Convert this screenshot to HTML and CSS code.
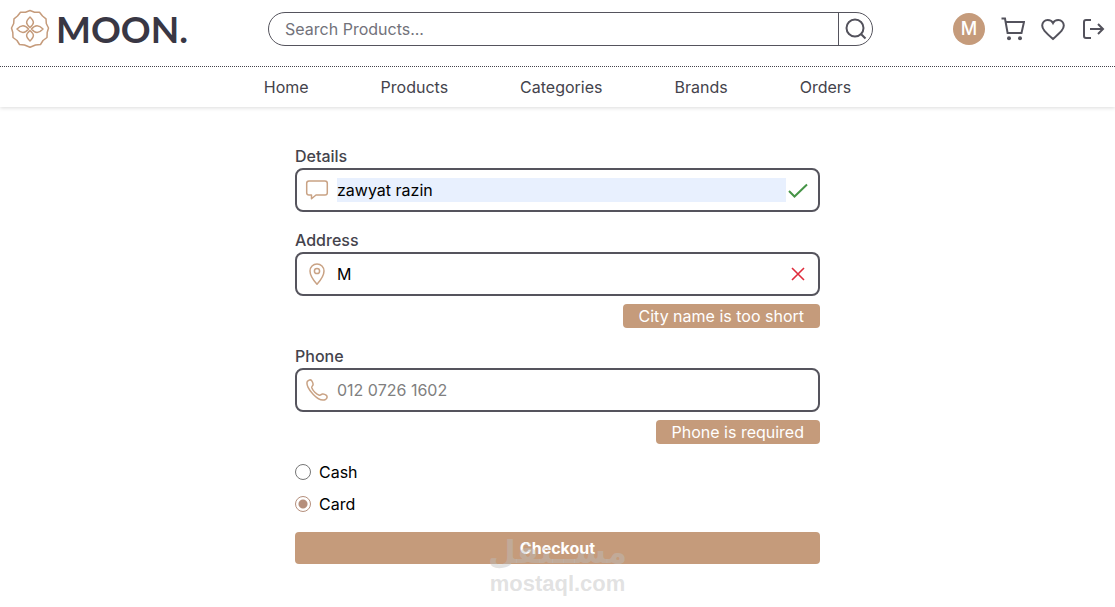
FILE: index.html
```
<!DOCTYPE html>
<html lang="en">
<head>
<meta charset="utf-8">
<meta name="viewport" content="width=device-width, initial-scale=1">
<title>Moon - Checkout</title>
<link rel="stylesheet" href="styles.css">
</head>
<body>
<header class="header">
  <div class="topbar">
    <a class="logo" href="#">
      <svg class="logo-mark" viewBox="0 0 40 40" aria-hidden="true">
        <path d="M20 1.500L24.500 3.200L29.500 3.200L32.500 7L36 9.800L36.300 14.500L38.500 19L37.200 23.500L37 28.500L33 31.500L30.500 35.500L25.500 36L20 38.300L14.500 36L9.500 35.500L7 31.500L3 28.500L2.800 23.500L1.500 19L3.700 14.500L4 9.800L7.500 7L10.500 3.200L15.500 3.200Z"/>
        <path d="M20 8C24.500 12.500 24.500 14.500 20 18.500C15.500 14.500 15.500 12.500 20 8ZM20 32C24.500 27.500 24.500 25.500 20 21.500C15.500 25.500 15.500 27.500 20 32ZM7 20C11 15.500 15 15.500 18.500 20C15 24.500 11 24.500 7 20ZM33 20C29 15.500 25 15.500 21.500 20C25 24.500 29 24.500 33 20Z"/>
      </svg>
      <span class="logo-text">MOON.</span>
    </a>
    <form class="search" role="search">
      <input class="search-input" type="search" placeholder="Search Products..." aria-label="Search Products">
      <button class="search-button" type="button" aria-label="Search">
        <svg class="icon" viewBox="0 0 24 24" aria-hidden="true"><circle cx="11" cy="11" r="8.500"/><path d="M17.200 17.200L21.500 21.500"/></svg>
      </button>
    </form>
    <div class="actions">
      <a class="avatar" href="#" aria-label="Account">M</a>
      <a class="action" href="#" aria-label="Cart"><svg class="icon" viewBox="0 0 24 24" aria-hidden="true"><path d="M.5 1.500H4L6.600 16H20.500L23 5H4.800"/><circle class="dot" cx="8" cy="21.300" r="2"/><circle class="dot" cx="19" cy="21.300" r="2"/></svg></a>
      <a class="action" href="#" aria-label="Wishlist"><svg class="icon" viewBox="0 0 24 24" aria-hidden="true"><path d="M12 22C9.800 20 5.500 16 3.500 13.800C1.700 11.800 1.200 10.300 1.200 8.600C1.200 5.500 3.600 3 6.700 3C9 3 11 4 12 6C13 4 15 3 17.300 3C20.400 3 22.800 5.500 22.800 8.600C22.800 10.300 22.300 11.800 20.500 13.800C18.500 16 14.200 20 12 22Z"/></svg></a>
      <a class="action" href="#" aria-label="Log out"><svg class="icon" viewBox="0 0 24 24" aria-hidden="true"><path d="M10 3H5Q3 3 3 5V19Q3 21 5 21H10M9 12H22M17 7L22 12L17 17"/></svg></a>
    </div>
  </div>
  <nav class="nav">
    <a href="#">Home</a>
    <a href="#">Products</a>
    <a href="#">Categories</a>
    <a href="#">Brands</a>
    <a href="#">Orders</a>
  </nav>
</header>

<main class="main">
  <form class="checkout">
    <div class="field">
      <label for="details">Details</label>
      <div class="control">
        <svg class="field-icon" viewBox="0 0 24 24" aria-hidden="true"><path d="M4 3H20Q22.300 3 22.300 5.300V14.700Q22.300 17 20 17H11L6.500 20.800V17H4Q1.700 17 1.700 14.700V5.300Q1.700 3 4 3Z"/></svg>
        <input class="text-input filled" id="details" type="text" value="zawyat razin">
        <svg class="status valid" viewBox="0 0 24 24" aria-hidden="true"><path d="M3 13L8.500 18.500L21 6.500"/></svg>
      </div>
    </div>
    <div class="field">
      <label for="address">Address</label>
      <div class="control">
        <svg class="field-icon" viewBox="0 0 24 24" aria-hidden="true"><path d="M12 22.300C9.500 19.500 5 13.500 5 9C5 4.800 8.100 2 12 2C15.900 2 19 4.800 19 9C19 13.500 14.500 19.500 12 22.300Z"/><circle cx="12" cy="9" r="2.600"/></svg>
        <input class="text-input" id="address" type="text" value="M" aria-describedby="address-error">
        <svg class="status invalid" viewBox="0 0 24 24" aria-hidden="true"><path d="M6 6L18 18M18 6L6 18"/></svg>
      </div>
      <p class="error" id="address-error">City name is too short</p>
    </div>
    <div class="field">
      <label for="phone">Phone</label>
      <div class="control">
        <svg class="field-icon" viewBox="0 0 24 24" aria-hidden="true"><path d="M2.300 3.500C3.500 1.700 5.600 1.400 6.600 2.600C7.800 4.200 8.300 5.600 8 6.800C7.800 7.800 6.500 8.400 6.800 9.700C7.800 12.700 11.300 16.200 14.300 17.200C15.600 17.500 16.200 16.200 17.200 16C18.400 15.700 20 16.200 21.400 17.400C22.500 18.400 22.300 20.300 20.500 21.500C17.500 23 12.500 20.800 8.300 16.500C3.700 12 1 6.500 2.300 3.500Z"/></svg>
        <input class="text-input" id="phone" type="tel" placeholder="012 0726 1602" aria-describedby="phone-error">
      </div>
      <p class="error" id="phone-error">Phone is required</p>
    </div>
    <div class="options">
      <label class="option" for="cash"><input class="radio" id="cash" type="radio" name="payment">Cash</label>
      <label class="option" for="card"><input class="radio" id="card" type="radio" name="payment" checked>Card</label>
    </div>
    <div class="submit-row">
      <button class="submit" type="button">Checkout</button>
      <div class="watermark">
        <span class="watermark-ar" lang="ar" dir="rtl">مســتقل</span>
        <span class="watermark-en">mostaql.com</span>
      </div>
    </div>
  </form>
</main>
</body>
</html>
```

FILE: styles.css
```
* {
  box-sizing: border-box;
}

body {
  margin: 0;
  background: #fff;
  color: #44434c;
  font: 16px/24px Inter, "Liberation Sans", sans-serif;
}

a {
  color: inherit;
  text-decoration: none;
}

.header {
  box-shadow: 0 1px 4px rgba(0, 0, 0, 0.14);
}

.topbar {
  display: flex;
  align-items: center;
  justify-content: space-between;
  gap: 80px;
  padding: 8px 10px 16px;
  border-bottom: 1px dotted #44434c;
}

.logo {
  display: flex;
  align-items: center;
  gap: 6px;
  height: 42px;
}

.logo-mark {
  width: 40px;
  height: 40px;
  fill: none;
  stroke: #c59b7b;
  stroke-width: 1.5;
  stroke-linejoin: round;
}

.logo-text {
  color: #393744;
  font: 700 37px/40px Lato, sans-serif;
}

.search {
  display: flex;
  flex: 1;
  max-width: 607px;
  height: 34px;
  border: 1px solid #55545d;
  border-radius: 17px;
  overflow: hidden;
}

.search-input {
  flex: 1;
  min-width: 0;
  padding: 0 16px;
  border: 0;
  outline: 0;
  background: transparent;
  color: inherit;
  font: inherit;
}

.search-input::placeholder {
  color: #72727a;
}

.search-button {
  display: flex;
  align-items: center;
  justify-content: center;
  width: 34px;
  padding: 0;
  border: 0;
  border-left: 1px solid #55545d;
  background: transparent;
}

.icon {
  display: block;
  width: 24px;
  height: 24px;
  fill: none;
  stroke: #53525c;
  stroke-width: 2;
}

.dot {
  fill: #53525c;
  stroke: none;
}

.actions {
  display: flex;
  align-items: center;
  gap: 16px;
}

.avatar {
  width: 32px;
  height: 32px;
  border-radius: 50%;
  background: #c59b7b;
  color: #fff;
  font-size: 18px;
  font-weight: 500;
  line-height: 32px;
  text-align: center;
}

.nav {
  display: flex;
  justify-content: center;
  gap: 72px;
  padding: 8px;
}

.main {
  padding: 37px 16px;
}

.checkout {
  display: flex;
  flex-direction: column;
  gap: 16px;
  max-width: 525px;
  margin: 0 auto;
}

.field {
  display: flex;
  flex-direction: column;
  font-weight: 500;
}

.control {
  display: flex;
  align-items: center;
  gap: 8px;
  height: 44px;
  padding: 0 8px;
  border: 2px solid #55545d;
  border-radius: 8px;
}

.field-icon {
  flex: none;
  width: 24px;
  height: 24px;
  fill: none;
  stroke: #c9a284;
  stroke-width: 1.5;
  stroke-linejoin: round;
}

.text-input {
  flex: 1;
  min-width: 0;
  height: 24px;
  padding: 0;
  border: 0;
  outline: 0;
  background: transparent;
  color: #000;
  font: 400 16px/24px Inter, "Liberation Sans", sans-serif;
}

.text-input::placeholder {
  color: #808080;
}

.filled {
  background: #e8f0fe;
}

.status {
  flex: none;
  width: 24px;
  height: 24px;
  margin-left: -8px;
  fill: none;
  stroke-width: 2;
}

.valid {
  stroke: #469447;
}

.invalid {
  stroke: #df2c3c;
  stroke-width: 1.6;
}

.error {
  align-self: flex-end;
  margin: 8px 0 0;
  padding: 0 16px;
  border-radius: 4px;
  background: #c59b7b;
  color: #fff;
  font-weight: 400;
}

.options {
  display: flex;
  flex-direction: column;
  align-items: flex-start;
  gap: 8px;
  color: #000;
}

.option {
  display: flex;
  align-items: center;
  gap: 8px;
}

.radio {
  appearance: none;
  width: 16px;
  height: 16px;
  margin: 0;
  border: 1px solid #767676;
  border-radius: 50%;
  background: #fff;
}

.radio:checked {
  border-color: #b58f7c;
  background: radial-gradient(circle, #b58f7c 4px, #fff 5px);
}

.submit-row {
  position: relative;
}

.submit {
  display: block;
  width: 100%;
  height: 32px;
  padding: 0;
  border: 0;
  border-radius: 4px;
  background: #c59b7b;
  color: #fff;
  font: 700 16px/24px Inter, "Liberation Sans", sans-serif;
}

.watermark {
  position: absolute;
  top: 0;
  left: 50%;
  display: flex;
  flex-direction: column;
  align-items: center;
  transform: translateX(-50%);
  color: rgba(190, 190, 190, 0.45);
  pointer-events: none;
}

.watermark-ar {
  font: 700 32px/40px "DejaVu Sans", sans-serif;
}

.watermark-en {
  font: 700 22px/24px "Liberation Sans", sans-serif;
}
```
